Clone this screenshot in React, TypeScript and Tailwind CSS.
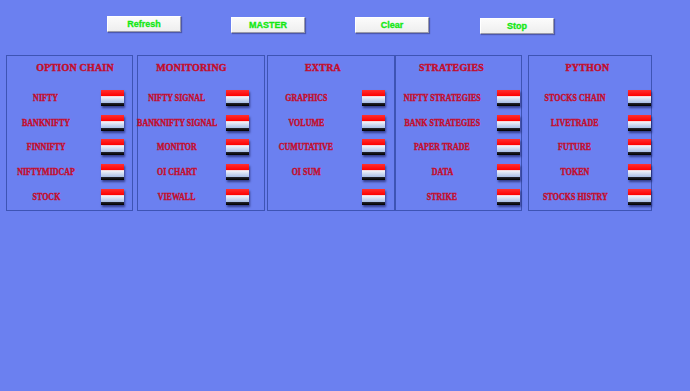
import React from "react";

type Panel = {
  title: string;
  labels: string[];
  box: string;
  titleCls: string;
  labelCls: string;
  toggleCls: string;
};

const panels: Panel[] = [
  {
    title: "OPTION CHAIN",
    labels: ["NIFTY", "BANKNIFTY", "FINNIFTY", "NIFTYMIDCAP", "STOCK"],
    box: "ml-[6px] w-[127px]",
    titleCls: "pl-[11px]",
    labelCls: "w-[78px]",
    toggleCls: "ml-[16px]",
  },
  {
    title: "MONITORING",
    labels: ["NIFTY SIGNAL", "BANKNIFTY SIGNAL", "MONITOR", "OI CHART", "VIEWALL"],
    box: "ml-[4px] w-[128px]",
    titleCls: "pr-[19px]",
    labelCls: "w-[78px]",
    toggleCls: "ml-[10px]",
  },
  {
    title: "EXTRA",
    labels: ["GRAPHICS", "VOLUME", "CUMUTATIVE", "OI SUM", ""],
    box: "ml-[2px] w-[128px]",
    titleCls: "pr-[16px]",
    labelCls: "w-[76px]",
    toggleCls: "ml-[18px]",
  },
  {
    title: "STRATEGIES",
    labels: ["NIFTY STRATEGIES", "BANK STRATEGIES", "PAPER TRADE", "DATA", "STRIKE"],
    box: "ml-0 w-[127px]",
    titleCls: "pr-[14px]",
    labelCls: "w-[92px]",
    toggleCls: "ml-[9px]",
  },
  {
    title: "PYTHON",
    labels: ["STOCKS CHAIN", "LIVETRADE", "FUTURE", "TOKEN", "STOCKS HISTRY"],
    box: "ml-[6px] w-[124px]",
    titleCls: "pr-[5px]",
    labelCls: "w-[92px]",
    toggleCls: "ml-[7px]",
  },
];

function Toggle({ cls }: { cls: string }) {
  return (
    <div
      className={`${cls} h-[16px] w-[23px] shrink-0 shadow-[1px_2px_2px_rgba(10,10,60,0.55)] bg-[linear-gradient(to_bottom,#ff3030_0%,#ff0000_38%,#f5f6fb_41%,#a8bee6_81%,#202028_84%,#000000_100%)]`}
    />
  );
}

function TopButton({ label, cls }: { label: string; cls: string }) {
  return (
    <div
      className={`${cls} flex h-[16px] w-[74px] items-center justify-center border border-t-white border-l-white border-r-[#9a9aa8] border-b-[#9a9aa8] bg-[linear-gradient(to_bottom,#fbfbfb,#eeeeee)] shadow-[1px_1px_1px_rgba(40,40,90,0.45)] text-[9px] font-bold leading-none text-[#12e812] [font-family:'Liberation_Sans',Arial,sans-serif] [-webkit-text-stroke:0.3px_#12e812]`}
    >
      {label}
    </div>
  );
}

export default function App() {
  return (
    <div className="h-[391px] w-[690px] overflow-hidden bg-[#6b80f0] [font-family:'Liberation_Serif','Times_New_Roman',serif]">
      <div className="flex h-[55px] items-start">
        <TopButton label="Refresh" cls="ml-[107px] mt-[16px]" />
        <TopButton label="MASTER" cls="ml-[50px] mt-[17px]" />
        <TopButton label="Clear" cls="ml-[50px] mt-[17px]" />
        <TopButton label="Stop" cls="ml-[51px] mt-[18px]" />
      </div>
      <div className="flex items-start">
        {panels.map((p) => (
          <div
            key={p.title}
            className={`${p.box} h-[156px] shrink-0 border border-[#3e54b4]`}
          >
            <div
              className={`${p.titleCls} flex h-[29.5px] justify-center pt-[6px] whitespace-nowrap`}
            >
              <span className="inline-block text-[10px] font-bold leading-[11px] tracking-[0.2px] text-[#c40d2c] [-webkit-text-stroke:0.4px_#c40d2c]">
                {p.title}
              </span>
            </div>
            {p.labels.map((l, i) => (
              <div key={i} className="flex h-[24.75px] items-center">
                <div
                  className={`${p.labelCls} flex shrink-0 justify-center whitespace-nowrap`}
                >
                  <span className="inline-block scale-x-[0.8] text-[10px] font-bold leading-none text-[#c40d2c] [-webkit-text-stroke:0.4px_#c40d2c]">
                    {l}
                  </span>
                </div>
                <Toggle cls={p.toggleCls} />
              </div>
            ))}
          </div>
        ))}
      </div>
    </div>
  );
}
